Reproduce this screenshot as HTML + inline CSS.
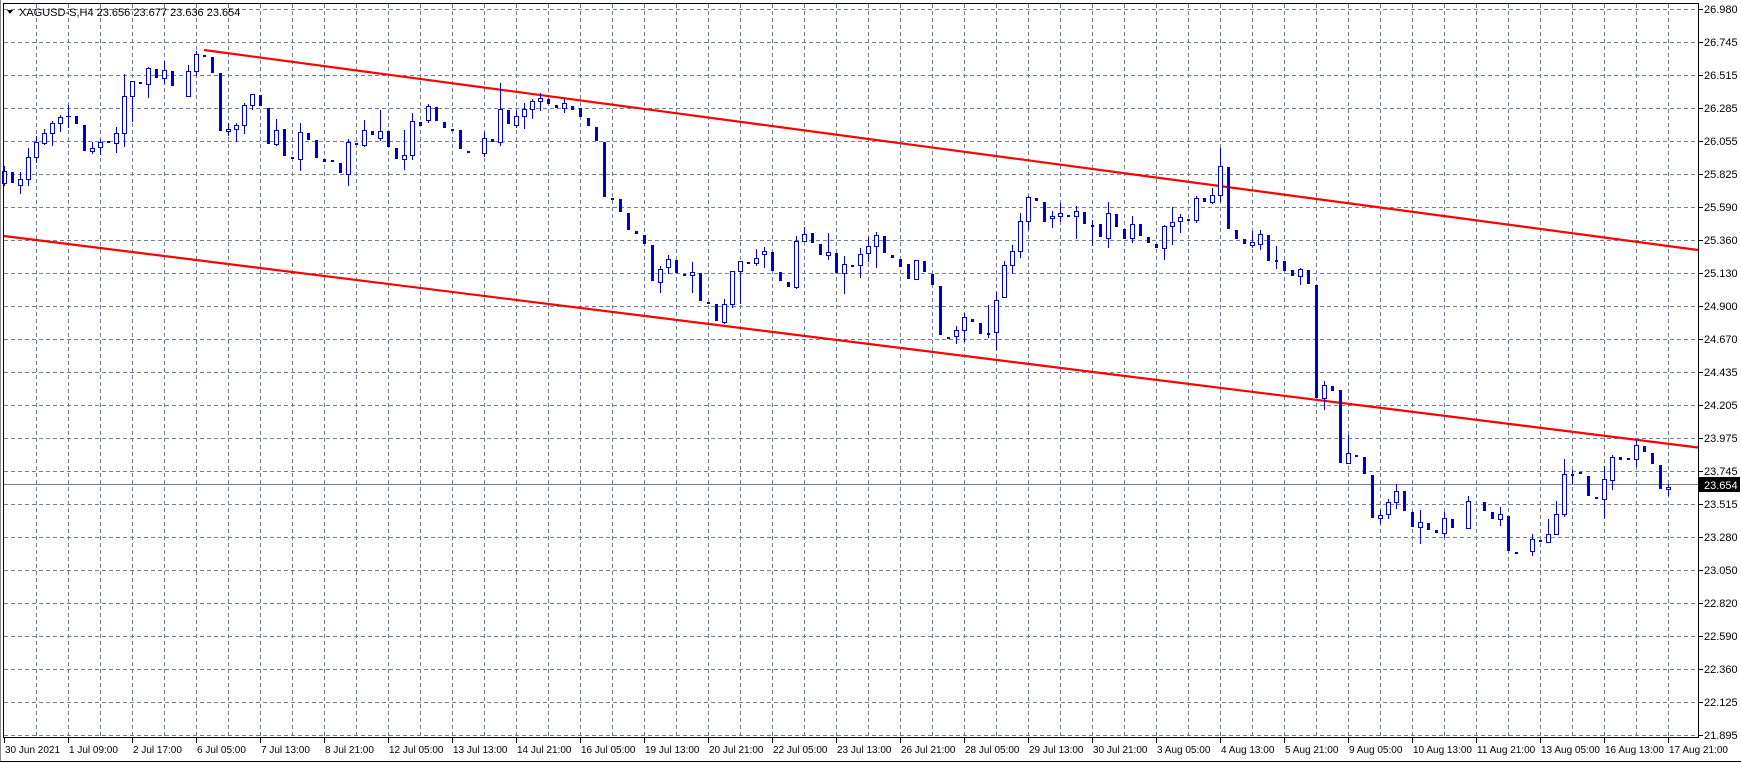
<!DOCTYPE html>
<html><head><meta charset="utf-8">
<style>
html,body{margin:0;padding:0;background:#fff;width:1741px;height:763px;overflow:hidden}
svg{display:block}
text{font-family:"Liberation Sans",sans-serif;font-size:11px;fill:#000}
#tlabels text{font-size:10px}
</style></head><body>
<svg id="s" width="1741" height="763" xmlns="http://www.w3.org/2000/svg" shape-rendering="crispEdges">
<rect x="0" y="0" width="1741" height="763" fill="#fff"/>
<g id="grid" stroke="#708090" stroke-width="1" stroke-dasharray="4,3"></g>
<line x1="4" y1="484.5" x2="1698" y2="484.5" stroke="#708090" stroke-width="1"/>
<g shape-rendering="auto">
<line x1="204" y1="50" x2="1698" y2="250" stroke="#ff0000" stroke-width="2.2"/>
<line x1="4" y1="236" x2="1698" y2="447.5" stroke="#ff0000" stroke-width="2.2"/>
</g>
<g id="candles"></g>
<rect x="3.5" y="3.5" width="1695" height="734" fill="none" stroke="#000" stroke-width="1"/>
<line x1="0" y1="761.5" x2="1741" y2="761.5" stroke="#000"/>
<line x1="0.5" y1="0" x2="0.5" y2="761" stroke="#888"/>
<g id="ticks" stroke="#000"></g>
<path d="M7 10 L13 10 L10 14 Z" fill="#000"/>
<text x="19" y="16">XAGUSD-S,H4  23.656 23.677 23.636 23.654</text>
<g id="plabels">
<text x="1704" y="13">26.980</text>
<text x="1704" y="46">26.745</text>
<text x="1704" y="79">26.515</text>
<text x="1704" y="112">26.285</text>
<text x="1704" y="145">26.055</text>
<text x="1704" y="178">25.825</text>
<text x="1704" y="211">25.590</text>
<text x="1704" y="244">25.360</text>
<text x="1704" y="277">25.130</text>
<text x="1704" y="310">24.900</text>
<text x="1704" y="343">24.670</text>
<text x="1704" y="376">24.435</text>
<text x="1704" y="409">24.205</text>
<text x="1704" y="442">23.975</text>
<text x="1704" y="475">23.745</text>
<text x="1704" y="508">23.515</text>
<text x="1704" y="541">23.280</text>
<text x="1704" y="574">23.050</text>
<text x="1704" y="607">22.820</text>
<text x="1704" y="640">22.590</text>
<text x="1704" y="673">22.360</text>
<text x="1704" y="706">22.125</text>
<text x="1704" y="739">21.895</text>
</g>
<rect x="1699" y="477" width="41" height="15" fill="#000"/>
<text x="1704" y="489" style="fill:#fff">23.654</text>
<g id="tlabels">
<text x="5" y="753">30 Jun 2021</text>
<text x="69" y="753">1 Jul 09:00</text>
<text x="133" y="753">2 Jul 17:00</text>
<text x="197" y="753">6 Jul 05:00</text>
<text x="261" y="753">7 Jul 13:00</text>
<text x="325" y="753">8 Jul 21:00</text>
<text x="389" y="753">12 Jul 05:00</text>
<text x="453" y="753">13 Jul 13:00</text>
<text x="517" y="753">14 Jul 21:00</text>
<text x="581" y="753">16 Jul 05:00</text>
<text x="645" y="753">19 Jul 13:00</text>
<text x="709" y="753">20 Jul 21:00</text>
<text x="773" y="753">22 Jul 05:00</text>
<text x="837" y="753">23 Jul 13:00</text>
<text x="901" y="753">26 Jul 21:00</text>
<text x="965" y="753">28 Jul 05:00</text>
<text x="1029" y="753">29 Jul 13:00</text>
<text x="1093" y="753">30 Jul 21:00</text>
<text x="1157" y="753">3 Aug 05:00</text>
<text x="1221" y="753">4 Aug 13:00</text>
<text x="1285" y="753">5 Aug 21:00</text>
<text x="1349" y="753">9 Aug 05:00</text>
<text x="1413" y="753">10 Aug 13:00</text>
<text x="1477" y="753">11 Aug 21:00</text>
<text x="1541" y="753">13 Aug 05:00</text>
<text x="1605" y="753">16 Aug 13:00</text>
<text x="1669" y="753">17 Aug 21:00</text>
</g>
</svg>
<script>
(function(){
var NS="http://www.w3.org/2000/svg";
function el(p,t,a){var e=document.createElementNS(NS,t);for(var k in a)e.setAttribute(k,a[k]);p.appendChild(e);return e;}
var g=document.getElementById('grid');
for(var x=36;x<1698;x+=32){el(g,'line',{x1:x+.5,y1:4,x2:x+.5,y2:737});}
for(var i=0;i<23;i++){var y=Math.round(9+33*i)+.5;el(g,'line',{x1:4,y1:y,x2:1698,y2:y});}
var t=document.getElementById('ticks');
for(var i=0;i<23;i++){var y=Math.round(9+33*i)+.5;el(t,'line',{x1:1699,y1:y,x2:1703,y2:y});}
for(var i=0;i<27;i++){var x=4+64*i+.5;el(t,'line',{x1:x,y1:738,x2:x,y2:743});}
var D=`0 u 171 183 166 185
1 d 172 183
2 u 179 185 172 193
3 u 157 179 148 185
4 u 142 157 136 162
5 u 133 143 129 144
6 u 123 133 121 145
7 u 117 123 115 131
8 x 116 116 105 127
9 d 116 124
10 d 125 151
11 u 148 151 142 153
12 u 142 147 139 154
13 d 141 142
14 u 133 143 127 152
15 u 96 133 74 146
16 u 81 96 81 121
17 d 82 84
18 u 68 84 67 97
19 d 69 78
20 u 70 78 61 83
21 d 71 86
23 u 71 96 65 96
24 u 54 71 51 75
25 d 55 56
26 d 57 73
27 d 73 131
28 u 129 131 123 135
29 u 125 129 123 141
30 u 105 125 103 133
31 u 94 105 94 109
32 d 95 106
33 d 108 144
34 u 130 144 119 145
35 d 129 156
36 d 157 158
37 u 132 159 123 170
38 d 133 140
39 d 140 158
40 d 159 162
41 d 160 162
42 d 163 173
43 u 142 174 139 185
44 d 143 144
45 u 130 145 120 146
46 d 131 135
47 u 131 138 110 140
48 d 131 147
49 d 148 159
50 u 155 159 130 169
51 u 121 155 113 159
52 d 122 126
53 u 106 120 104 122
54 d 107 121
55 d 122 128
56 d 129 130
57 d 130 149
58 d 151 153
60 u 138 153 132 156
61 d 139 142
62 u 109 142 83 145
63 d 110 124
64 u 116 125 110 127
65 u 109 116 103 128
66 u 101 109 99 118
67 u 98 101 93 110
68 d 99 104
69 d 105 108
70 u 103 108 99 112
71 d 106 110
72 d 108 117
73 d 118 126
74 d 127 141
75 d 142 197
76 d 198 199
77 d 199 212
78 d 213 230
79 d 231 234
80 d 235 244
81 d 245 281
82 u 269 282 266 292
83 u 259 267 255 273
84 d 260 273
85 d 274 275
86 u 272 275 262 292
87 d 273 301
88 d 302 303
89 d 304 321
90 u 304 322 299 323
91 u 271 304 271 307
92 u 261 271 261 303
93 d 262 263
94 u 258 263 249 265
95 u 251 254 247 267
96 d 252 271
97 d 272 281
98 d 282 287
99 u 241 287 236 288
100 u 234 241 227 241
101 d 233 243
102 d 244 255
103 u 252 255 233 259
104 d 253 273
105 u 264 273 256 293
106 d 265 267
107 u 254 265 248 277
108 u 246 253 237 261
109 u 235 246 232 267
110 d 236 253
111 d 255 258
112 d 259 267
113 d 264 279
114 u 260 279 260 279
115 d 261 272
116 d 274 285
117 d 286 335
118 d 337 338
119 u 330 336 326 343
120 u 317 330 313 341
121 d 319 322
122 d 323 334
123 d 333 334 305 337
124 u 300 332 292 349
125 u 265 297 261 297
126 u 251 265 245 273
127 u 221 251 213 257
128 u 197 221 196 229
129 d 198 201
130 d 202 222
131 u 216 218 211 227
132 u 213 216 203 221
133 d 215 216
134 u 211 216 206 238
135 d 212 224
136 d 225 226 220 245
137 d 224 237
138 u 213 238 202 247
139 d 214 227
140 d 229 239
141 u 224 238 216 242
142 d 224 236
143 d 237 243
144 d 244 248
145 u 226 248 225 259
146 u 222 226 207 244
147 u 217 221 214 232
148 d 219 220
149 u 198 220 196 222
150 d 198 202
151 u 195 202 188 203
152 u 166 195 148 201
153 d 167 229
154 d 230 239
155 d 239 244
156 u 242 245 231 247
157 u 234 244 230 249
158 d 235 261
159 d 260 262 246 268
160 d 261 271
161 d 270 276
162 u 269 276 268 284
163 d 270 284
164 d 285 398
165 u 385 398 381 409
166 d 386 391
167 d 390 463
168 u 453 463 435 463
169 d 455 456
170 d 457 474
171 d 475 518
172 u 515 518 510 523
173 u 502 514 499 518
174 u 491 502 484 508
175 d 491 511
176 d 512 527
177 u 522 527 510 543
178 d 523 530
179 d 530 533
180 u 518 533 512 537
181 d 519 528
183 u 501 528 496 528
185 d 502 511
186 d 512 519
187 u 514 519 507 525
188 d 516 551
189 d 552 554
191 u 539 551 534 555
192 d 540 541
193 u 534 542 519 542
194 u 514 534 501 534
195 u 474 514 459 516
196 d 474 475 470 483
197 d 472 474
198 d 476 496
199 d 497 499
200 u 479 499 466 518
201 u 457 480 455 489
202 d 457 460
203 d 458 459
204 u 445 459 440 466
205 d 446 452
206 d 453 464
207 d 465 489
208 u 487 489 484 495`;
var c=document.getElementById('candles');var col='#0000cd';
D.split('\n').forEach(function(l){
 var p=l.trim().split(/\s+/);var k=+p[0],ty=p[1],t=+p[2],b=+p[3];
 var wt=p.length>4?+p[4]:t, wb=p.length>5?+p[5]:b;
 var cx=4.5+8*k;
 if(wt<t||wb>b) el(c,'line',{x1:cx,y1:wt,x2:cx,y2:wb+1,stroke:col,'stroke-width':1});
 if(ty==='u'){
   el(c,'rect',{x:cx-2,y:t+.5,width:4,height:Math.max(b-t,1),fill:'#fff',stroke:col,'stroke-width':1});
 } else if(ty==='x'){
   el(c,'line',{x1:cx-2.5,y1:t+.5,x2:cx+2.5,y2:t+.5,stroke:col,'stroke-width':1});
 } else {
   el(c,'rect',{x:cx-1.5,y:t,width:3,height:Math.max(b-t,2),fill:col});
 }
});
})();
</script>
</body></html>
